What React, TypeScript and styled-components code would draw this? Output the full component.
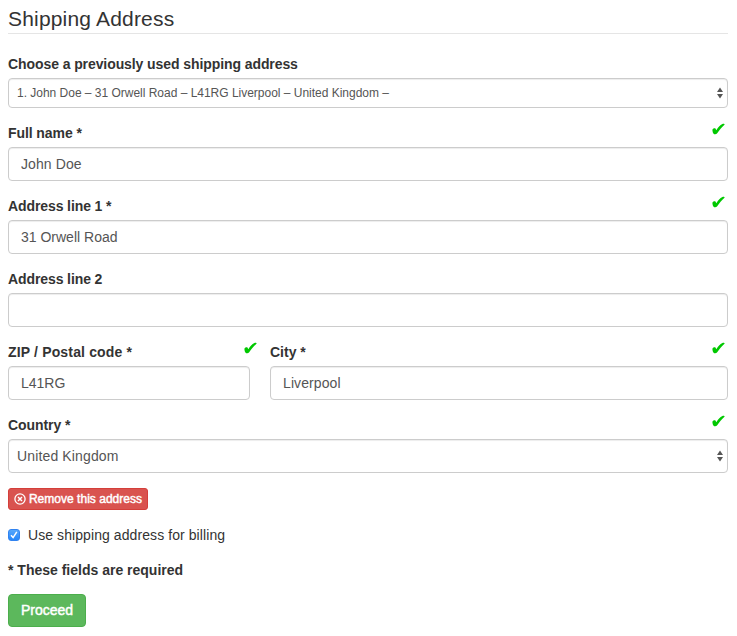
import React, { useState } from "react";
import styled, { createGlobalStyle, css } from "styled-components";

const GlobalStyle = createGlobalStyle`
  * { box-sizing: border-box; }
  body {
    margin: 0;
    background: #fff;
    color: #333;
    font-family: "Liberation Sans", Arial, sans-serif;
    font-size: 14px;
    line-height: 20px;
  }
`;

const Form = styled.form`
  width: 720px;
  margin-left: 8px;
  padding-top: 4px;
`;

const Legend = styled.h1`
  margin: 0 0 20px;
  height: 30px;
  border-bottom: 1px solid #e5e5e5;
  font-size: 21px;
  font-weight: 400;
  line-height: 30px;
  letter-spacing: 0.18px;
`;

const Columns = styled.div`
  display: grid;
  grid-template-columns: 242px 458px;
  column-gap: 20px;
`;

const Field = styled.div`
  margin-bottom: 15px;
`;

const LabelRow = styled.div<{ $overhang?: boolean }>`
  display: flex;
  justify-content: space-between;
  height: 24px;
  margin-right: ${(p) => (p.$overhang ? "-7px" : "3px")};
`;

const Label = styled.label<{ $track?: number }>`
  font-weight: 700;
  letter-spacing: ${(p) => p.$track ?? 0}px;
`;

const Tick = styled.svg`
  width: 13px;
  height: 12px;
  fill: #00c800;
`;

const control = css`
  display: block;
  width: 100%;
  border: 1px solid #ccc;
  border-radius: 4px;
  background: #fff;
  box-shadow: inset 0 1px 1px rgba(0, 0, 0, 0.075);
  color: #555;
  font-family: inherit;
  outline: none;
`;

const Input = styled.input<{ $track?: number }>`
  ${control}
  height: 34px;
  padding: 6px 12px;
  font-size: 14px;
  letter-spacing: ${(p) => p.$track ?? 0}px;
`;

const SelectFrame = styled.div`
  position: relative;
`;

const Select = styled.select<{ $small?: boolean; $track?: number }>`
  ${control}
  appearance: none;
  height: ${(p) => (p.$small ? 30 : 34)}px;
  padding: 0 20px 1px 8px;
  font-size: ${(p) => (p.$small ? 12 : 14)}px;
  letter-spacing: ${(p) => p.$track ?? 0}px;
`;

const Arrows = styled.svg`
  position: absolute;
  right: 5px;
  top: calc(50% - 6px);
  width: 6px;
  height: 12px;
  fill: #555;
  pointer-events: none;
`;

const Button = styled.button<{ $small?: boolean }>`
  display: flex;
  align-items: center;
  justify-content: center;
  gap: 3px;
  padding: 0;
  color: #fff;
  white-space: nowrap;
  font-family: inherit;
  -webkit-text-stroke: 0.45px #fff;
  ${(p) =>
    p.$small
      ? css`
          width: 140px;
          height: 22px;
          margin-top: 15px;
          border: 1px solid #d43f3a;
          border-radius: 3px;
          background: #d9534f;
          font-size: 12px;
          letter-spacing: 0.02px;
        `
      : css`
          width: 78px;
          height: 33px;
          padding-bottom: 2px;
          border: 1px solid #4cae4c;
          border-radius: 4px;
          background: #5cb85c;
          font-size: 14px;
        `}
`;

const RemoveIcon = styled.svg`
  width: 12px;
  height: 12px;
  fill: none;
  stroke: #fff;
`;

const CheckLine = styled.label`
  display: flex;
  align-items: center;
  gap: 8px;
  margin-top: 15px;
  letter-spacing: 0.08px;
`;

const HiddenCheckbox = styled.input`
  position: absolute;
  opacity: 0;
`;

const CheckBox = styled.span<{ $on: boolean }>`
  display: flex;
  width: 12px;
  height: 12px;
  border: 1px solid ${(p) => (p.$on ? "#3183f0" : "#bbb")};
  border-radius: 3px;
  background: ${(p) => (p.$on ? "linear-gradient(#56a7fb, #2586fa)" : "#fff")};
`;

const Required = styled.p`
  margin: 15px 0 14px;
  font-weight: 700;
`;

const Check = () => (
  <Tick viewBox="0 0 13 12" aria-label="valid">
    <path d="M0.4 6.9 C0.5 5.7 2.8 4.8 3.6 5.7 L4.3 7.2 C6 4.4 8 2.1 10.4 0.9 C11.6 0.4 13.1 0.8 12.5 1.8 C9.6 4.4 7.4 7 5.2 10.3 C4.4 11.4 2.6 11.7 1.6 10.8 C0.9 9.9 0.5 8.4 0.4 6.9Z" />
  </Tick>
);

const UpDown = () => (
  <Arrows viewBox="0 0 6 12">
    <path d="M3 0.6 L6 5.1 H0Z M3 11.4 L0 6.9 H6Z" />
  </Arrows>
);

type TextFieldProps = {
  id: string;
  label: string;
  value?: string;
  valid?: boolean;
  overhang?: boolean;
  labelTrack?: number;
  track?: number;
};

const TextField = ({ id, label, value = "", valid, overhang, labelTrack, track }: TextFieldProps) => (
  <Field>
    <LabelRow $overhang={overhang}>
      <Label htmlFor={id} $track={labelTrack}>{label}</Label>
      {valid && <Check />}
    </LabelRow>
    <Input id={id} defaultValue={value} $track={track} />
  </Field>
);

export default function App() {
  const [billing, setBilling] = useState(true);
  return (
    <>
      <GlobalStyle />
      <Form onSubmit={(e) => e.preventDefault()}>
        <Legend>Shipping Address</Legend>
        <Field>
          <LabelRow>
            <Label htmlFor="previous" $track={-0.085}>Choose a previously used shipping address</Label>
          </LabelRow>
          <SelectFrame>
            <Select id="previous" $small $track={-0.015}>
              <option>1. John Doe – 31 Orwell Road – L41RG Liverpool – United Kingdom –</option>
            </Select>
            <UpDown />
          </SelectFrame>
        </Field>
        <TextField id="name" label="Full name *" labelTrack={-0.08} value="John Doe" track={0.1} valid />
        <TextField id="address1" label="Address line 1 *" labelTrack={-0.1} value="31 Orwell Road" valid />
        <TextField id="address2" label="Address line 2" labelTrack={-0.1} />
        <Columns>
          <TextField id="zip" label="ZIP / Postal code *" labelTrack={0.16} value="L41RG" valid overhang />
          <TextField id="city" label="City *" value="Liverpool" track={0.1} valid />
        </Columns>
        <div>
          <LabelRow>
            <Label htmlFor="country" $track={-0.08}>Country *</Label>
            <Check />
          </LabelRow>
          <SelectFrame>
            <Select id="country" $track={0.14}>
              <option>United Kingdom</option>
            </Select>
            <UpDown />
          </SelectFrame>
        </div>
        <Button type="button" $small>
          <RemoveIcon viewBox="0 0 12 12">
            <circle cx="6" cy="6" r="5.1" strokeWidth="1.3" />
            <path d="M4 4 L8 8 M8 4 L4 8" strokeWidth="1.5" />
          </RemoveIcon>
          Remove this address
        </Button>
        <CheckLine>
          <HiddenCheckbox type="checkbox" checked={billing} onChange={() => setBilling(!billing)} />
          <CheckBox $on={billing}>
            <svg viewBox="0 0 10 10" width="10" height="10" fill="none" stroke="#fff" strokeWidth="1.5">
              <path d="M2 5.3 L4.1 7.6 L7.8 1.9" />
            </svg>
          </CheckBox>
          Use shipping address for billing
        </CheckLine>
        <Required>* These fields are required</Required>
        <Button type="submit">Proceed</Button>
      </Form>
    </>
  );
}
